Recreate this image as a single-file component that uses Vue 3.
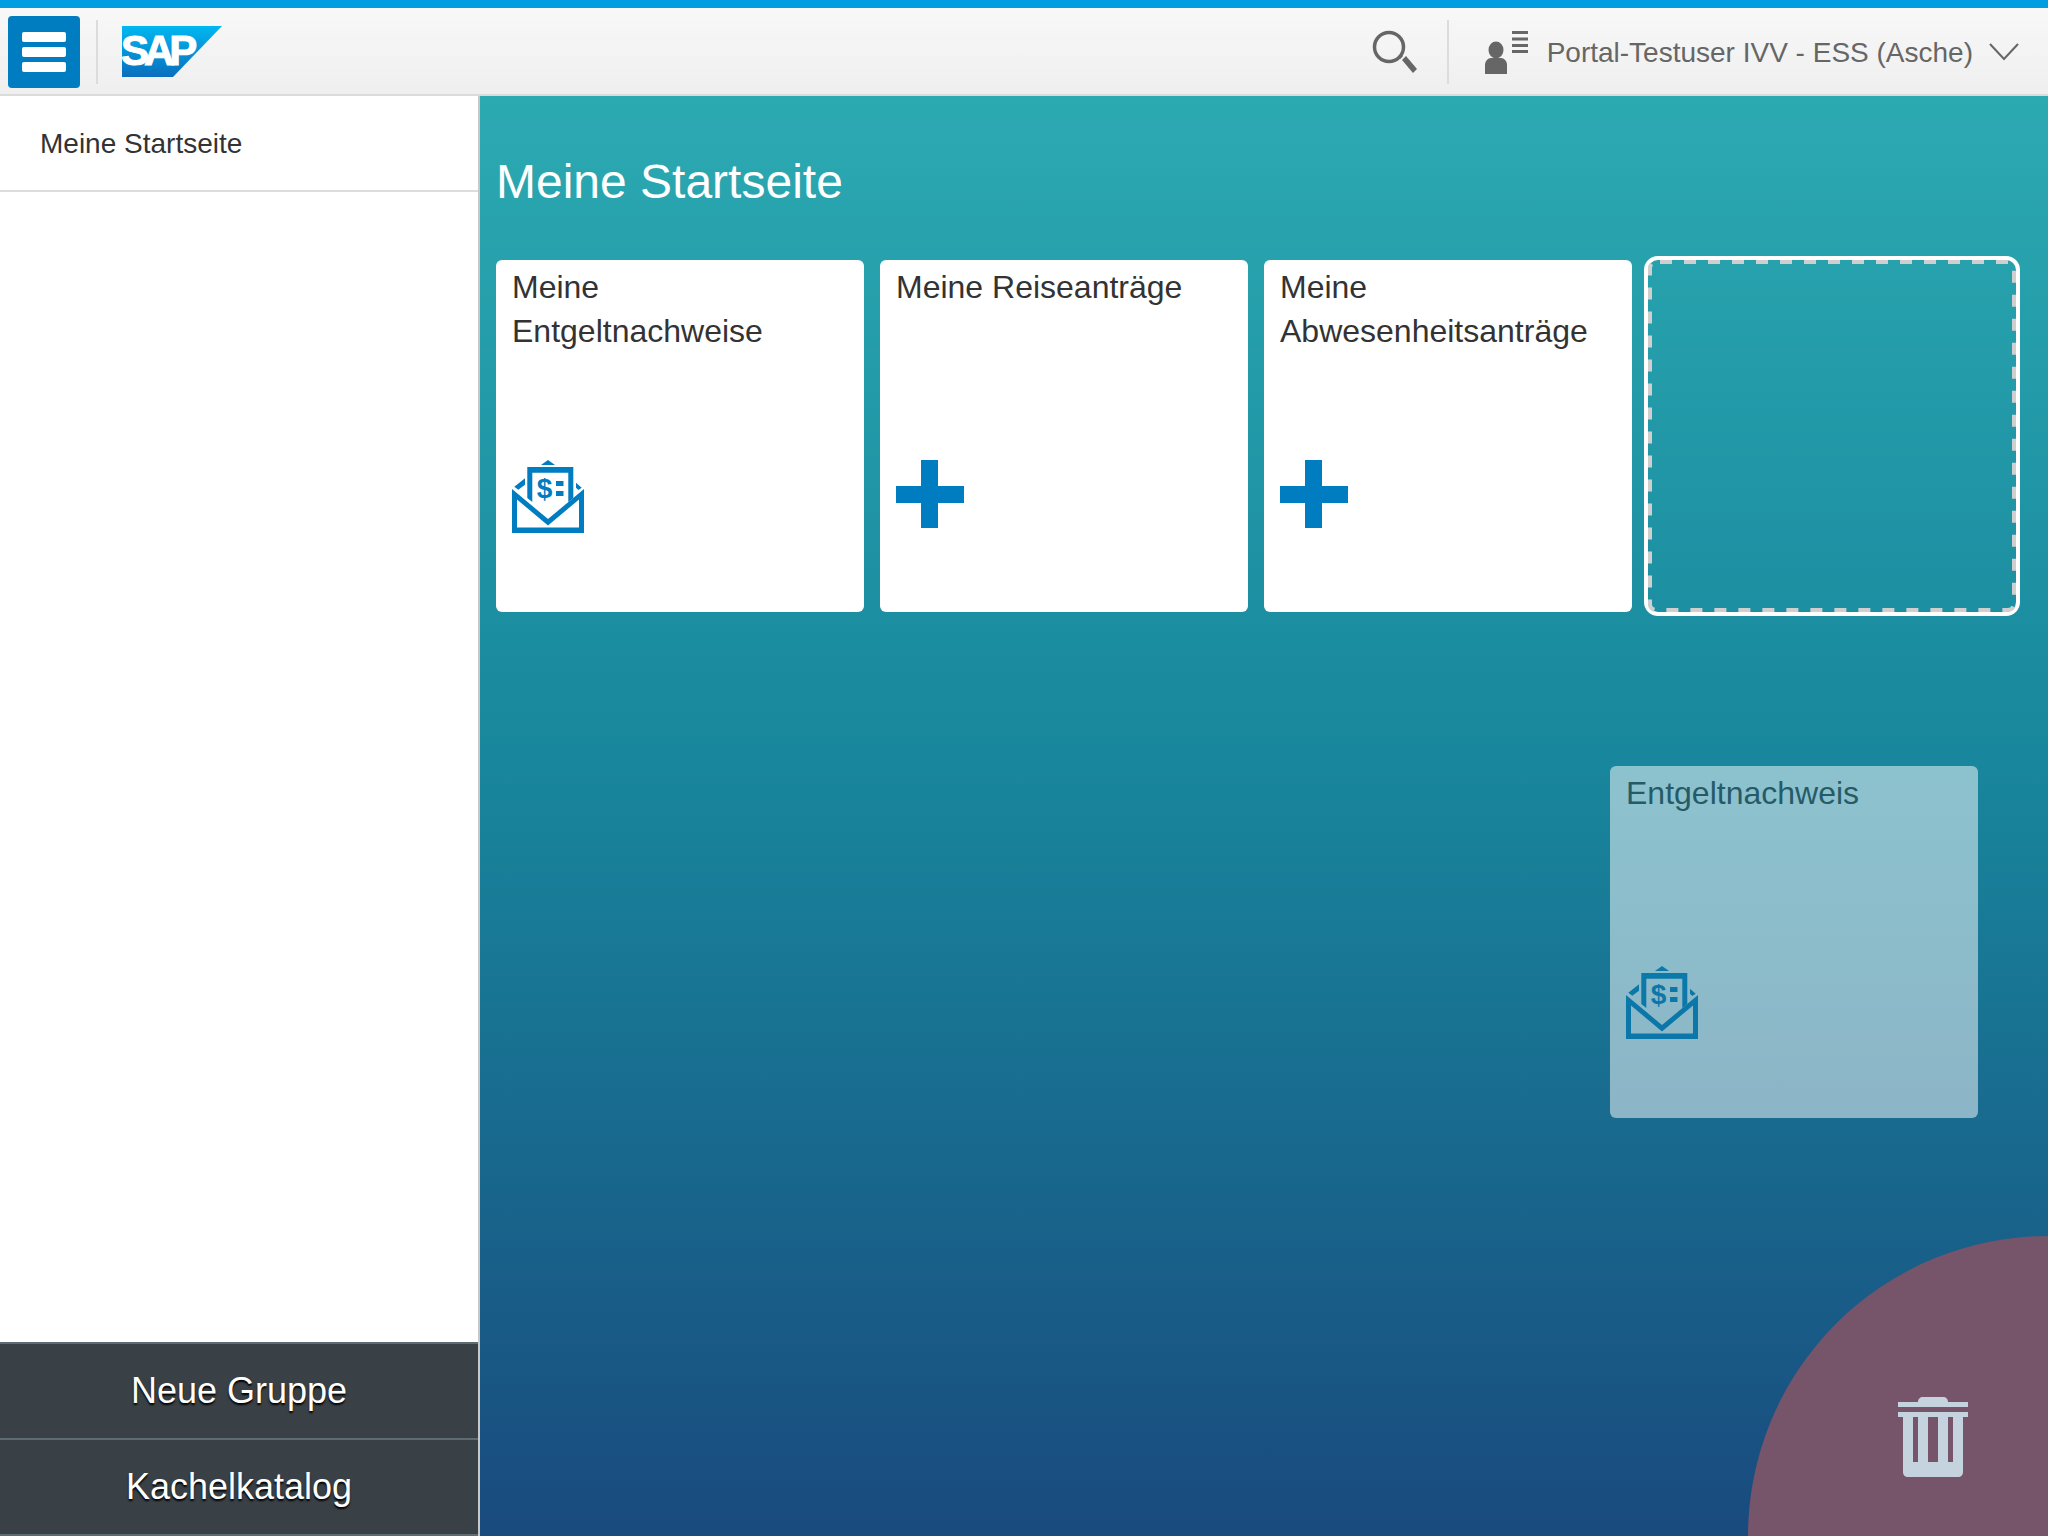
<template>
  <div class="page">
    <div class="top-line"></div>
    <header class="shell-header">
      <button class="menu-btn" aria-label="Menü">
        <span></span><span></span><span></span>
      </button>
      <div class="sep"></div>
      <svg class="sap-logo" width="100" height="51" viewBox="0 0 100 51">
        <defs>
          <linearGradient id="sapGrad" x1="0" y1="0" x2="0" y2="1">
            <stop offset="0" stop-color="#00b8f1" />
            <stop offset="1" stop-color="#0a6ebd" />
          </linearGradient>
        </defs>
        <polygon points="0,0 100,0 51,51 0,51" fill="url(#sapGrad)" />
        <text x="-1" y="39" class="sap-text">SAP</text>
      </svg>
      <div class="spacer"></div>
      <svg class="search-icon" width="46" height="46" viewBox="0 0 46 46">
        <circle cx="17" cy="17" r="14.5" fill="none" stroke="#666" stroke-width="3.5" />
        <path d="M27 28l3-3" stroke="#666" stroke-width="3" />
        <path d="M30 30l4-4 11 13-4 4z" fill="#666" />
      </svg>
      <div class="sep sep-right"></div>
      <svg class="user-icon" width="46" height="46" viewBox="0 0 46 46">
        <ellipse cx="13" cy="20" rx="7.5" ry="8.5" fill="#666" />
        <path d="M2 35c0-4 3-7 6-7h10c3 0 6 3 6 7v9H2z" fill="#666" />
        <path d="M29 1h16v3H29zM29 7.500h16v3H29zM29 14h16v3H29zM29 20h16v3H29z" fill="#666" />
      </svg>
      <span class="user-name">Portal-Testuser IVV - ESS (Asche)</span>
      <svg class="chevron" width="30" height="18" viewBox="0 0 30 18">
        <path d="M1 1l14 15L29 1" fill="none" stroke="#666" stroke-width="2" />
      </svg>
    </header>

    <div class="body">
      <aside class="sidebar">
        <div class="side-item">Meine Startseite</div>
        <div class="side-fill"></div>
        <button class="side-btn">Neue Gruppe</button>
        <button class="side-btn">Kachelkatalog</button>
      </aside>

      <main class="content">
        <h1 class="group-title">Meine Startseite</h1>
        <div class="tiles">
          <div v-for="tile in tiles" :key="tile.title" class="tile">
            <div class="tile-title">{{ tile.title }}</div>
            <svg v-if="tile.icon === 'mail'" class="tile-icon" width="72" height="73" viewBox="0 0 72 73">
              <use href="#mailIcon" />
            </svg>
            <svg v-else class="tile-icon" width="68" height="68" viewBox="0 0 68 68">
              <path d="M25 0h17v26h26v17H42v25H25V43H0V26h25z" fill="#007cc0" />
            </svg>
          </div>
          <div class="tile-slot">
            <svg class="slot-dash" width="368" height="352" viewBox="0 0 368 352">
              <rect x="2" y="2" width="364" height="348" rx="6" fill="none" stroke="#cfcfcf" stroke-width="4" stroke-dasharray="12 12" stroke-dashoffset="-4" />
            </svg>
          </div>
        </div>

        <div class="tile tile-drag">
          <div class="tile-title">Entgeltnachweis</div>
          <svg class="tile-icon" width="72" height="73" viewBox="0 0 72 73">
            <use href="#mailIcon" />
          </svg>
        </div>

        <div class="trash-zone">
          <svg class="trash-icon" width="70" height="80" viewBox="0 0 70 80">
            <path d="M20 5c0-3 2-5 5-5h20c3 0 5 2 5 5h20v5H0V5z" fill="#c5d3de" />
            <path fill-rule="evenodd" d="M0 15h70v5h-5v55c0 3-2 5-5 5H10c-3 0-5-2-5-5V20H0zM15 20v45h5V20zM30 20v45h10V20zM50 20v45h5V20z" fill="#c5d3de" />
          </svg>
        </div>
      </main>
    </div>

    <!-- shared icon so the two tiles stay the same -->
    <svg class="icon-defs" width="0" height="0">
      <defs>
        <g id="mailIcon" fill="#007cc0">
          <path d="M29 5l7-5 7 5z" />
          <path d="M15.300 7h46v31l-5 4V12.700h-36V42l-5-4z" />
          <path d="M2.300 26.700L13 18.300v6.400l-6.700 5zM64 22.700l5.700 5-3.400 2.300-2.300-2.300z" />
          <path fill-rule="evenodd" d="M0 29l36 30 36-30v44H0zM5 39.500V67.500h62V39.500L36 65.500z" />
          <text x="32.500" y="38" class="mail-dollar">$</text>
          <path d="M44 21h7.500v5H44zM44 31h7.500v5H44z" />
        </g>
      </defs>
    </svg>
  </div>
</template>

<script setup>
const tiles = [
  { title: 'Meine Entgeltnachweise', icon: 'mail' },
  { title: 'Meine Reiseanträge', icon: 'plus' },
  { title: 'Meine Abwesenheitsanträge', icon: 'plus' }
]
</script>

<style>
body {
  margin: 0;
  overflow: hidden;
}

/* lives in a <use> target, so not scoped */
.mail-dollar {
  font-family: "Liberation Sans", Arial, sans-serif;
  font-weight: 700;
  font-size: 28px;
  text-anchor: middle;
}
</style>

<style scoped>
.page {
  width: 2048px;
  height: 1536px;
  display: flex;
  flex-direction: column;
  font-family: "Liberation Sans", Arial, sans-serif;
  overflow: hidden;
}

.top-line {
  height: 8px;
  background: #009de0;
  flex: none;
}

.shell-header {
  height: 88px;
  flex: none;
  box-sizing: border-box;
  display: flex;
  align-items: center;
  padding: 2px 29px 0 8px;
  background: linear-gradient(to bottom, #f8f8f8, #efefef);
  border-bottom: 2px solid #dcdcdc;
}

.menu-btn {
  width: 72px;
  height: 72px;
  box-sizing: border-box;
  padding: 0 14px;
  border: none;
  border-radius: 4px;
  background: #007cc0;
  display: flex;
  flex-direction: column;
  justify-content: center;
  gap: 5px;
}

.menu-btn span {
  display: block;
  height: 10px;
  border-radius: 2px;
  background: #fff;
}

.sep {
  width: 2px;
  height: 64px;
  margin-left: 16px;
  background: #dcdcdc;
}

.sap-logo {
  margin-left: 24px;
  margin-top: -2px;
}

.sap-text {
  font-family: "Liberation Sans", Arial, sans-serif;
  font-weight: 700;
  font-size: 42px;
  letter-spacing: -5px;
  fill: #fff;
  stroke: #fff;
  stroke-width: 1px;
}

.spacer {
  flex: 1;
}

.search-icon {
  margin-top: 2px;
}

.sep-right {
  margin-left: 29px;
}

.user-icon {
  margin-left: 34px;
  margin-top: 2px;
}

.user-name {
  margin-left: 18px;
  margin-top: 2px;
  font-size: 28px;
  color: #666;
  white-space: nowrap;
}

.chevron {
  margin-left: 16px;
  margin-top: -1px;
}

.body {
  flex: 1;
  display: flex;
  min-height: 0;
}

.sidebar {
  width: 480px;
  flex: none;
  box-sizing: border-box;
  display: flex;
  flex-direction: column;
  background: #fff;
  border-right: 2px solid #c8c8c8;
}

.side-item {
  height: 96px;
  box-sizing: border-box;
  padding: 2px 0 0 40px;
  display: flex;
  align-items: center;
  font-size: 28px;
  color: #333;
  border-bottom: 2px solid #dcdcdc;
}

.side-fill {
  flex: 1;
}

.side-btn {
  height: 96px;
  flex: none;
  padding: 0;
  border: none;
  border-top: 2px solid #5f6b73;
  background: #3a4146;
  color: #fff;
  font-family: inherit;
  font-size: 36px;
  text-shadow: 0 2px 2px #000;
}

.side-btn:last-child {
  height: 98px;
  border-bottom: 2px solid #5f6b73;
}

.content {
  flex: 1;
  position: relative;
  box-sizing: border-box;
  padding: 61px 16px 0;
  background: linear-gradient(to bottom, #2caab2, #18879d 46%, #194a7e);
  overflow: hidden;
}

.group-title {
  margin: 0;
  height: 103px;
  font-size: 48px;
  font-weight: 400;
  line-height: 50px;
  color: #fff;
}

.tiles {
  display: flex;
  gap: 16px;
}

.tile {
  width: 368px;
  height: 352px;
  box-sizing: border-box;
  flex: none;
  padding: 5px 16px;
  border-radius: 6px;
  background: #fff;
  display: flex;
  flex-direction: column;
}

.tile-title {
  font-size: 32px;
  line-height: 44px;
  color: #333;
}

.tile-icon {
  position: absolute;
}

.tiles .tile {
  position: relative;
}

.tiles .tile-icon {
  left: 16px;
  top: 200px;
}

.tile-slot {
  width: 368px;
  height: 352px;
  flex: none;
  position: relative;
  border-radius: 10px;
  outline: 4px solid #fff;
}

.slot-dash {
  position: absolute;
  left: 0;
  top: 0;
}

.tile-drag {
  position: absolute;
  left: 1130px;
  top: 670px;
  opacity: 0.5;
}

.tile-drag .tile-icon {
  left: 16px;
  top: 200px;
}

.trash-zone {
  position: absolute;
  right: -300px;
  bottom: -300px;
  width: 600px;
  height: 600px;
  border-radius: 50%;
  background: #765469;
}

.trash-icon {
  position: absolute;
  left: 150px;
  top: 161px;
}

.icon-defs {
  position: absolute;
}
</style>
